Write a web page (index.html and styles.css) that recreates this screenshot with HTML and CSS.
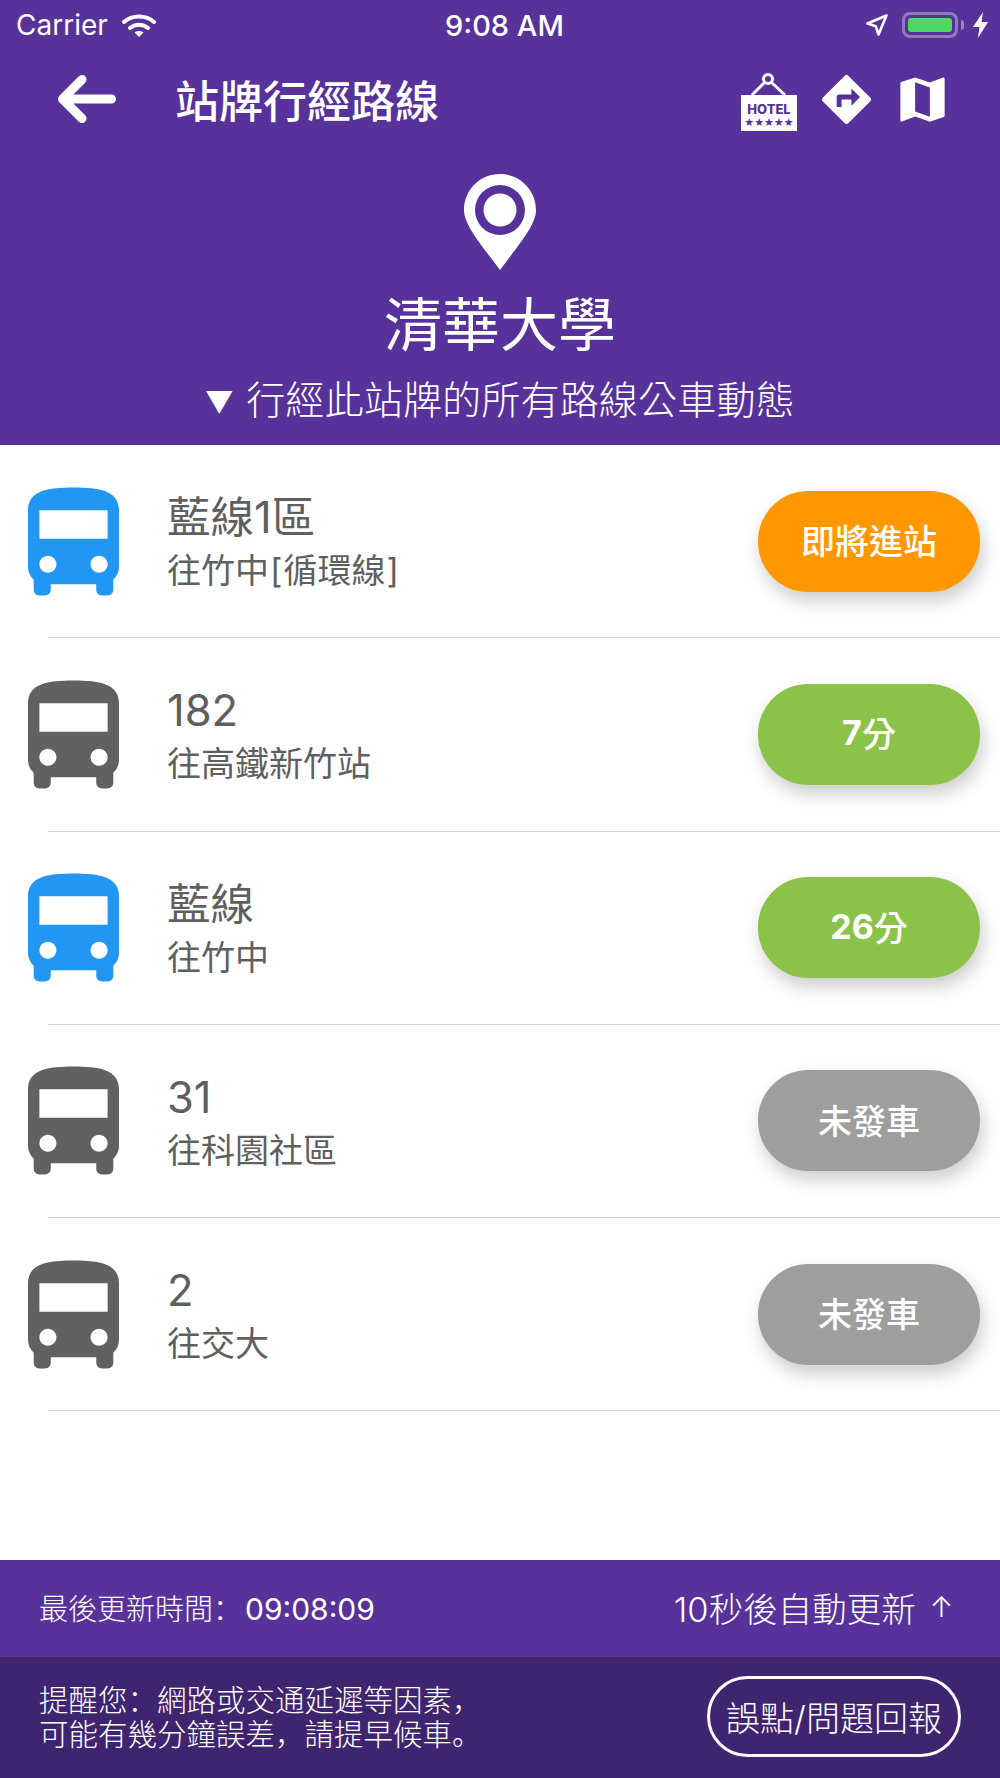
FILE: index.html
```html
<!DOCTYPE html>
<html lang="zh-Hant">
<head>
    <meta charset="UTF-8">
    <meta name="viewport" content="width=device-width, initial-scale=1.0">
    <title>站牌行經路線</title>
    <link rel="stylesheet" href="styles.css">
</head>
<body>

    <svg class="defs" width="0" height="0">
        <symbol id="bus" viewBox="4 2 16 19">
            <path d="M4 16c0 .88.39 1.67 1 2.22V20c0 .55.45 1 1 1h1c.55 0 1-.45 1-1v-1h8v1c0 .55.45 1 1 1h1c.55 0 1-.45 1-1v-1.78c.61-.55 1-1.34 1-2.22V6c0-3.5-3.58-4-8-4s-8 .5-8 4v10zm3.5 1c-.83 0-1.5-.67-1.5-1.5S6.67 14 7.5 14s1.5.67 1.5 1.5S8.33 17 7.5 17zm9 0c-.83 0-1.5-.67-1.5-1.5s.67-1.5 1.5-1.5 1.5.67 1.5 1.5-.67 1.5-1.5 1.5zm1.5-6H6V6h12v5z"/>
        </symbol>
    </svg>

    <header class="header">
        <div class="status-bar">
            <div class="status-left">
                <span>Carrier</span>
                <svg class="wifi" width="34" height="24" viewBox="0 0 34 24">
                    <path class="wifi-arc" d="M2 9 C10 1.5 24 1.5 32 9"/>
                    <path class="wifi-arc" d="M8 15 C13 10.5 21 10.5 26 15"/>
                    <path class="wifi-dot" d="M12.5 19.5 C15 17.5 19 17.5 21.5 19.5 L17 24 Z"/>
                </svg>
            </div>
            <div class="status-time">9:08 AM</div>
            <div class="status-right">
                <svg class="location" width="22" height="22" viewBox="0 0 22 22">
                    <path d="M20.5 1.5 L1.5 9.5 L9.8 12.2 L12.5 20.5 Z"/>
                </svg>
                <div class="battery"><div class="battery-fill"></div></div>
                <div class="battery-nub"></div>
                <svg class="bolt" width="15" height="26" viewBox="0 0 15 26">
                    <path d="M10 0 L0 15 H6.5 L5 26 L15 10 H8.5 Z"/>
                </svg>
            </div>
        </div>

        <div class="app-bar">
            <svg class="back" width="60" height="50" viewBox="0 0 60 50">
                <path d="M25 5.5 L5.5 25 L25 44.5 M5.5 25 H54.5"/>
            </svg>
            <h1 class="page-title">站牌行經路線</h1>
            <div class="actions">
                <svg class="hotel" width="56" height="58" viewBox="0 0 56 58">
                    <circle class="hotel-ring" cx="27" cy="6" r="4.5"/>
                    <path class="hotel-ring" d="M24 9 L11 22 M30 9 L44 22"/>
                    <rect class="hotel-board" x="0" y="22" width="56" height="36"/>
                    <text class="hotel-name" x="28" y="41">HOTEL</text>
                    <text class="hotel-stars" x="28" y="53">★★★★★</text>
                </svg>
                <svg class="action-icon" width="59" height="59" viewBox="0 0 24 24">
                    <path d="M21.71 11.29l-9-9a.996.996 0 0 0-1.41 0l-9 9a.996.996 0 0 0 0 1.41l9 9c.39.39 1.02.39 1.41 0l9-9a.996.996 0 0 0 0-1.41zM14 14.5V12h-4v3H8v-4c0-.55.45-1 1-1h5V7.5l3.5 3.5-3.5 3.5z"/>
                </svg>
                <svg class="action-icon" width="59" height="59" viewBox="0 0 24 24">
                    <path d="M20.5 3l-.16.03L15 5.1 9 3 3.36 4.9c-.21.07-.36.25-.36.48V20.5c0 .28.22.5.5.5l.16-.03L9 18.9l6 2.1 5.64-1.9c.21-.07.36-.25.36-.48V3.5c0-.28-.22-.5-.5-.5zM15 19l-6-2.11V5l6 2.11V19z"/>
                </svg>
            </div>
        </div>

        <div class="stop-info">
            <svg class="pin" width="72" height="96" viewBox="0 0 72 96">
                <path fill-rule="evenodd" d="M36 0 C56 0 72 16 72 36 C72 52 52 74 36 96 C20 74 0 52 0 36 C0 16 16 0 36 0 Z M36 11 A25 25 0 1 0 36 61 A25 25 0 1 0 36 11 Z"/>
                <circle cx="36" cy="36" r="16.5"/>
            </svg>
            <div class="stop-name">清華大學</div>
            <div class="stop-note"><span class="stop-arrow">▼</span>行經此站牌的所有路線公車動態</div>
        </div>
    </header>

    <main class="route-list">
        <div class="route-row">
            <svg class="bus bus-blue"><use href="#bus"/></svg>
            <div class="route-text">
                <div class="route-name">藍線1區</div>
                <div class="route-dest">往竹中<span class="bracket">[</span>循環線<span class="bracket">]</span></div>
            </div>
            <div class="pill pill-orange">即將進站</div>
        </div>
        <div class="route-row">
            <svg class="bus bus-grey"><use href="#bus"/></svg>
            <div class="route-text">
                <div class="route-name">182</div>
                <div class="route-dest">往高鐵新竹站</div>
            </div>
            <div class="pill pill-green"><span class="pill-num">7</span>分</div>
        </div>
        <div class="route-row">
            <svg class="bus bus-blue"><use href="#bus"/></svg>
            <div class="route-text">
                <div class="route-name">藍線</div>
                <div class="route-dest">往竹中</div>
            </div>
            <div class="pill pill-green"><span class="pill-num">26</span>分</div>
        </div>
        <div class="route-row">
            <svg class="bus bus-grey"><use href="#bus"/></svg>
            <div class="route-text">
                <div class="route-name">31</div>
                <div class="route-dest">往科園社區</div>
            </div>
            <div class="pill pill-grey">未發車</div>
        </div>
        <div class="route-row">
            <svg class="bus bus-grey"><use href="#bus"/></svg>
            <div class="route-text">
                <div class="route-name">2</div>
                <div class="route-dest">往交大</div>
            </div>
            <div class="pill pill-grey">未發車</div>
        </div>
    </main>

    <footer class="footer">
        <div class="update-bar">
            <div class="update-time" lang="zh-Hans">最後更新時間：<span class="clock">09:08:09</span></div>
            <div class="update-count">10秒後自動更新<span class="update-arrow">↑</span></div>
        </div>
        <div class="notice-bar">
            <div class="notice-text" lang="zh-Hans">
                <div class="notice-line">提醒您：網路或交通延遲等因素，</div>
                <div class="notice-line">可能有幾分鐘誤差，請提早候車。</div>
            </div>
            <div class="report-btn">誤點/問題回報</div>
        </div>
    </footer>

</body>
</html>
```

FILE: styles.css
```css
* {
    box-sizing: border-box;
}

body {
    margin: 0;
    height: 1778px;
    display: flex;
    flex-direction: column;
    background-color: white;
    color: white;
    font-family: Inter, "Noto Sans CJK TC", sans-serif;
}

.defs {
    position: absolute;
}

/* header */
.header {
    height: 445px;
    background-color: #57329a;
    flex-shrink: 0;
}

.status-bar {
    height: 50px;
    padding: 0 12px 0 16px;
    display: grid;
    grid-template-columns: 1fr auto 1fr;
    align-items: center;
    font-size: 28px;
}

.status-left {
    display: flex;
    align-items: center;
    gap: 14px;
}

.status-time {
    margin-left: 5px;
    font-weight: 500;
    font-size: 29px;
}

.status-right {
    display: flex;
    align-items: center;
    justify-content: flex-end;
}

.wifi-arc {
    fill: none;
    stroke: white;
    stroke-width: 4;
    stroke-linecap: round;
}

.wifi-dot,
.bolt path {
    fill: white;
}

.location {
    margin-right: 14px;
}

.location path {
    fill: none;
    stroke: white;
    stroke-width: 2.6;
    stroke-linejoin: round;
}

.battery {
    width: 56px;
    height: 26px;
    padding: 3px;
    border: 3px solid rgba(255, 255, 255, 0.35);
    border-radius: 8px;
}

.battery-fill {
    height: 100%;
    background-color: #4cd964;
    border-radius: 3px;
}

.battery-nub {
    width: 3px;
    height: 10px;
    margin: 0 9px 0 3px;
    background-color: rgba(255, 255, 255, 0.4);
    border-radius: 0 3px 3px 0;
}

.app-bar {
    height: 98px;
    padding-left: 57px;
    display: flex;
    align-items: center;
}

.back {
    flex-shrink: 0;
}

.back path {
    fill: none;
    stroke: white;
    stroke-width: 9;
    stroke-linecap: round;
    stroke-linejoin: round;
}

.page-title {
    margin: 0 0 0 58px;
    font-size: 44px;
    font-weight: 500;
}

.actions {
    margin-left: auto;
    margin-right: 48px;
    display: flex;
    align-items: center;
    gap: 17px;
}

.hotel {
    margin: 6px 3px 0 0;
}

.action-icon path {
    fill: white;
}

.hotel-ring {
    fill: none;
    stroke: white;
    stroke-width: 3;
}

.hotel-board {
    fill: white;
}

.hotel-name {
    fill: #57329a;
    font-size: 13px;
    font-weight: 800;
    text-anchor: middle;
}

.hotel-stars {
    fill: #57329a;
    font-size: 11px;
    text-anchor: middle;
    font-family: "DejaVu Sans", sans-serif;
}

.stop-info {
    padding-top: 26px;
    display: flex;
    flex-direction: column;
    align-items: center;
}

.pin {
    fill: white;
}

.stop-name {
    margin-top: 20px;
    font-size: 58px;
    line-height: 70px;
    font-weight: 400;
}

.stop-note {
    margin-top: 15px;
    display: flex;
    align-items: center;
    font-size: 39.2px;
    line-height: 50px;
    font-weight: 300;
}

.stop-arrow {
    margin-right: 13px;
    font-size: 28px;
    font-family: "Noto Sans CJK TC", sans-serif;
}

/* route rows */
.route-list {
    flex: 1;
}

.route-row {
    height: 193.25px;
    margin-left: 48px;
    padding-right: 20px;
    display: flex;
    align-items: center;
    border-bottom: 1px solid #d2d2d2;
}

.bus {
    width: 91px;
    height: 109px;
    margin-left: -20px;
    flex-shrink: 0;
}

.bus-blue {
    fill: #2196f3;
}

.bus-grey {
    fill: #616161;
}

.route-text {
    margin-left: 48px;
    padding-top: 6px;
    color: #5f5f5f;
    font-weight: 400;
}

.route-name {
    font-size: 43.5px;
    line-height: 50px;
}

.route-dest {
    margin-top: 4px;
    font-size: 34px;
    line-height: 50px;
}

.bracket {
    margin: 0 1px;
}

.pill {
    width: 222px;
    height: 101px;
    margin-left: auto;
    padding-bottom: 3px;
    display: flex;
    align-items: center;
    justify-content: center;
    border-radius: 50px;
    font-size: 34px;
    font-weight: 500;
    box-shadow: 3px 9px 18px rgba(0, 0, 0, 0.2);
}

.pill-num {
    font-weight: 700;
}

.pill-orange {
    background-color: #ff9800;
}

.pill-green {
    background-color: #8bc34a;
}

.pill-grey {
    background-color: #9e9e9e;
}

/* footer */
.footer {
    flex-shrink: 0;
}

.update-bar {
    height: 97px;
    padding: 0 47px 3px 39px;
    display: flex;
    align-items: center;
    justify-content: space-between;
    background-color: #57329a;
    font-weight: 300;
}

.update-time {
    font-size: 29px;
    font-family: Inter, "Noto Sans CJK SC", sans-serif;
}

.clock {
    margin-left: 3px;
    font-size: 30px;
    font-weight: 400;
}

.update-count {
    display: flex;
    align-items: center;
    font-size: 34.5px;
}

.update-arrow {
    margin-left: 14px;
    font-size: 28px;
}

.notice-bar {
    height: 121px;
    padding: 0 39px 2px 39px;
    display: flex;
    align-items: center;
    justify-content: space-between;
    background-color: #3f246f;
    font-weight: 300;
}

.notice-text {
    font-family: Inter, "Noto Sans CJK SC", sans-serif;
}

.notice-line {
    height: 34px;
    font-size: 29.5px;
    line-height: 34px;
}

.report-btn {
    width: 254px;
    height: 81px;
    display: flex;
    align-items: center;
    justify-content: center;
    border: 3px solid white;
    border-radius: 41px;
    font-size: 34px;
}
```
